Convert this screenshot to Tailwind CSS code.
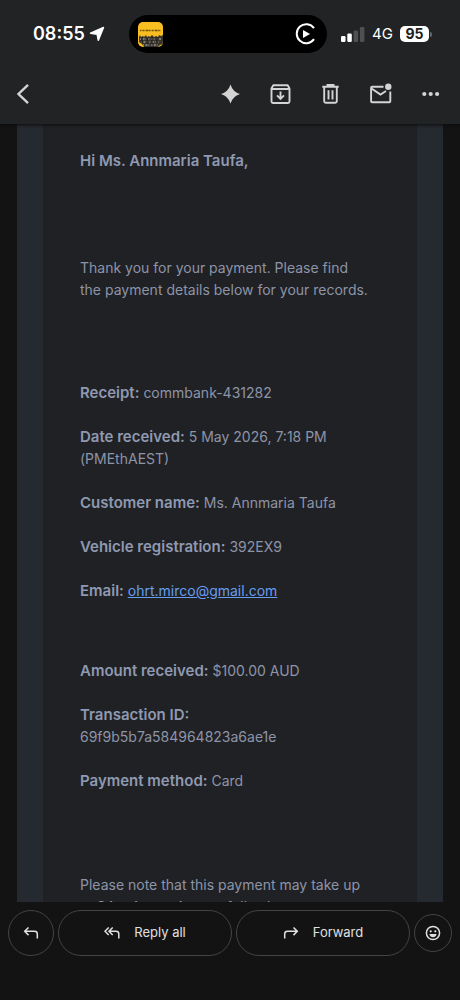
<!DOCTYPE html>
<html lang="en">
<head>
<meta charset="utf-8">
<meta name="viewport" content="width=device-width, initial-scale=1">
<title>Payment receipt</title>
<script src="https://cdn.jsdelivr.net/npm/@tailwindcss/browser@4"></script>
</head>
<body class="flex h-screen flex-col overflow-hidden bg-[#131313] font-['Inter',sans-serif] text-[#8d94a8]">
<header class="relative z-10 shrink-0 bg-[#212324] shadow-[0_1px_3px_#0c0c0c]">
  <div class="flex h-16 items-end pr-7 pl-[33px] pb-[11px]">
    <div class="flex h-[38px] w-24 items-center gap-1 text-lg font-semibold text-white">
      <span>08:55</span>
      <svg class="size-4 shrink-0" viewBox="0 0 16 16" fill="#fff" stroke="#fff" stroke-linejoin="round" stroke-width="1.500" aria-hidden="true"><path d="M14.500 1.500 9.300 14.300 8.200 8.300 1.500 7.200Z"/></svg>
    </div>
    <div class="flex h-[38px] w-[198px] items-center justify-between rounded-full bg-black pr-[10px] pl-[9px]">
      <svg class="size-[25px]" viewBox="0 0 25 25" role="img" aria-label="Now playing">
        <defs><clipPath id="art"><rect width="25" height="25" rx="5"/></clipPath></defs>
        <g clip-path="url(#art)">
          <rect width="25" height="25" fill="#f8bd20"/>
          <path d="M2 8.500H23" stroke="#6b500d" stroke-width="1.500" stroke-dasharray="1.500 1 2 1 3 .6"/>
          <path d="M1 15l1-2 1 2 2-1 1 1 2-2 1 2 2-1 1 1 2-2 2 2 2-1 2 1 1-2 2 1 2-1v9l-3 1-2 2H6l-2-3-3-2z" fill="#39352d"/>
          <path d="M2 17h21M3 20h19M5 23h15" stroke="#96958e" stroke-width="1.500" stroke-dasharray="1 1.500 2 1 .8 2"/>
          <path d="M4 15v6M9 16v6M14 15v7M19 15v6" stroke="#171717" stroke-width="1"/>
        </g>
      </svg>
      <svg class="size-[22px]" viewBox="0 0 22 22" fill="none" aria-hidden="true"><path d="M19 5.200A9.500 9.500 0 1 0 19 16.200" stroke="#fff" stroke-width="2"/><path d="M8 7v8l7-4z" fill="#fff"/></svg>
    </div>
    <div class="ml-auto flex h-[38px] items-center gap-[7px]">
      <svg class="h-[15px] w-6" viewBox="0 0 24 15" aria-hidden="true"><rect x="0" y="9" width="4.500" height="6" rx="1.200" fill="#fff"/><rect x="6.300" y="6.500" width="4.500" height="8.500" rx="1.200" fill="#fff"/><rect x="12.600" y="3.500" width="4.500" height="11.500" rx="1.200" fill="#4e5051"/><rect x="18.900" y="0" width="4.500" height="15" rx="1.200" fill="#4e5051"/></svg>
      <span class="text-[15px] text-white">4G</span>
      <div class="flex items-center gap-px">
        <span class="flex h-4 w-[29px] items-center justify-center rounded-[5px] bg-white text-sm font-bold text-[#202020]">95</span>
        <span class="h-[5px] w-[2px] rounded-r-full bg-[#66686a]"></span>
      </div>
    </div>
  </div>
  <div class="flex h-[60px] items-center justify-between pr-[17px] pl-[11px]">
    <button aria-label="Back" class="flex size-6 items-center justify-center"><svg class="size-6" viewBox="0 0 24 24" fill="none" stroke="#d4d4d4" stroke-width="2.400"><path d="M17 2.800 7.500 12l9.500 9.200"/></svg></button>
    <div class="flex items-center gap-[26px]">
      <button aria-label="Summarise" class="size-6"><svg class="size-6" viewBox="0 0 24 24" fill="#d4d4d4"><path d="M11.500 2.500Q13.700 9.800 21 12 13.700 14.200 11.500 21.500 9.300 14.200 2 12 9.300 9.800 11.500 2.500Z"/></svg></button>
      <button aria-label="Archive" class="size-6"><svg class="size-6" viewBox="0 0 24 24" fill="none" stroke="#d4d4d4" stroke-width="1.900"><path d="M2.500 6.500 4.300 3.200H18.700L20.500 6.500V19.500Q20.500 21 19 21H4Q2.500 21 2.500 19.500Z M2.500 7H20.500" stroke-linejoin="round"/><path d="M11.500 9.500V16.500M8 13.300 11.500 16.800 15 13.300"/></svg></button>
      <button aria-label="Delete" class="size-6"><svg class="size-6" viewBox="0 0 24 24" fill="none" stroke="#d4d4d4" stroke-width="1.900"><path d="M3.300 4.700H19.700M8.500 4V3H14.500V4M5.200 5V19.300Q5.200 20.800 6.700 20.800H16.300Q17.800 20.800 17.800 19.300V5M9.500 8.300V17.500M13.500 8.300V17.500"/></svg></button>
      <button aria-label="Mark as unread" class="size-6"><svg class="size-6" viewBox="0 0 24 24" fill="none" stroke="#d4d4d4" stroke-width="1.900"><path d="M14.500 4.800H3.100Q2.100 4.800 2.100 5.800V19.200Q2.100 20.200 3.100 20.200H20.300Q21.300 20.200 21.300 19.200V9.500"/><path d="M2.500 6.500 11.500 12.500 17 9"/><circle cx="19.300" cy="4.800" r="3.200" fill="#d4d4d4" stroke="none"/></svg></button>
      <button aria-label="More" class="size-6"><svg class="size-6" viewBox="0 0 24 24" fill="#d4d4d4"><circle cx="5.300" cy="12" r="2.100"/><circle cx="11.700" cy="12" r="2.100"/><circle cx="18.100" cy="12" r="2.100"/></svg></button>
    </div>
  </div>
</header>
<main class="min-h-0 flex-1 overflow-hidden px-[17px]">
  <article class="min-h-full bg-[#252930] px-[26px]">
    <div class="bg-[#202124] pt-[26px] pr-[47px] pl-[37px] text-[14px] leading-[22px]">
      <p class="text-[15px] leading-[22px] font-semibold text-[#8f99b1]">Hi Ms. Annmaria Taufa,</p>
      <p class="mt-[85px]">Thank you for your payment. Please find the payment details below for your records.</p>
      <div class="mt-[81px] flex flex-col gap-[22px]">
        <p><strong class="text-[15px] leading-[22px] font-semibold text-[#8f99b1]">Receipt:</strong> commbank-431282</p>
        <p><strong class="text-[15px] leading-[22px] font-semibold text-[#8f99b1]">Date received:</strong> 5 May 2026, 7:18 PM (PMEthAEST)</p>
        <p><strong class="text-[15px] leading-[22px] font-semibold text-[#8f99b1]">Customer name:</strong> Ms. Annmaria Taufa</p>
        <p><strong class="text-[15px] leading-[22px] font-semibold text-[#8f99b1]">Vehicle registration:</strong> 392EX9</p>
        <p><strong class="text-[15px] leading-[22px] font-semibold text-[#8f99b1]">Email:</strong> <a href="mailto:ohrt.mirco@gmail.com" class="text-[#669df0] underline">ohrt.mirco@gmail.com</a></p>
      </div>
      <div class="mt-[58px] flex flex-col gap-[22px]">
        <p><strong class="text-[15px] leading-[22px] font-semibold text-[#8f99b1]">Amount received:</strong> $100.00 AUD</p>
        <p><strong class="text-[15px] leading-[22px] font-semibold text-[#8f99b1]">Transaction ID:</strong> 69f9b5b7a584964823a6ae1e</p>
        <p><strong class="text-[15px] leading-[22px] font-semibold text-[#8f99b1]">Payment method:</strong> Card</p>
      </div>
      <p class="mt-[82px]">Please note that this payment may take up to <strong class="font-semibold">3 business days</strong> to fully clear.</p>
    </div>
  </article>
</main>
<footer class="h-[98px] shrink-0 px-2 pt-2">
  <div class="flex items-center gap-1 text-[13px] text-[#e0e0e0]">
    <button aria-label="Reply" class="flex size-[46px] shrink-0 items-center justify-center rounded-full border border-[#444]"><svg class="size-4" viewBox="0 0 16 16" fill="none" stroke="#e0e0e0" stroke-width="1.500"><path d="M5.500 2.500 1.700 6.300 5.500 10.100M2 6.300H11.500Q14.300 6.300 14.300 9V13.500"/></svg></button>
    <button class="flex h-[46px] flex-1 items-center justify-center gap-[14px] rounded-full border border-[#444]"><svg class="size-4" viewBox="0 0 16 16" fill="none" stroke="#e0e0e0" stroke-width="1.500"><path d="M4.700 2.500 1 6.300 4.700 10.100M8.700 2.500 5 6.300 8.700 10.100M5.500 6.300H12Q14.800 6.300 14.800 9V13.500"/></svg>Reply all</button>
    <button class="flex h-[46px] flex-1 items-center justify-center gap-[14px] rounded-full border border-[#444]"><svg class="size-4" viewBox="0 0 16 16" fill="none" stroke="#e0e0e0" stroke-width="1.500"><path d="M10.500 2.500 14.300 6.300 10.500 10.100M14 6.300H4.500Q1.700 6.300 1.700 9V13.500"/></svg>Forward</button>
    <button aria-label="Add reaction" class="flex size-[38px] shrink-0 items-center justify-center rounded-full border border-[#444]"><svg class="size-4" viewBox="0 0 16 16" fill="none" stroke="#e0e0e0" stroke-width="1.500"><circle cx="8" cy="8" r="6.600"/><circle cx="5.700" cy="6.300" r="1.100" fill="#e0e0e0" stroke="none"/><circle cx="10.300" cy="6.300" r="1.100" fill="#e0e0e0" stroke="none"/><path d="M4.300 9H11.700Q10.700 12.300 8 12.300T4.300 9Z" fill="#e0e0e0" stroke="none"/></svg></button>
  </div>
</footer>
</body>
</html>
